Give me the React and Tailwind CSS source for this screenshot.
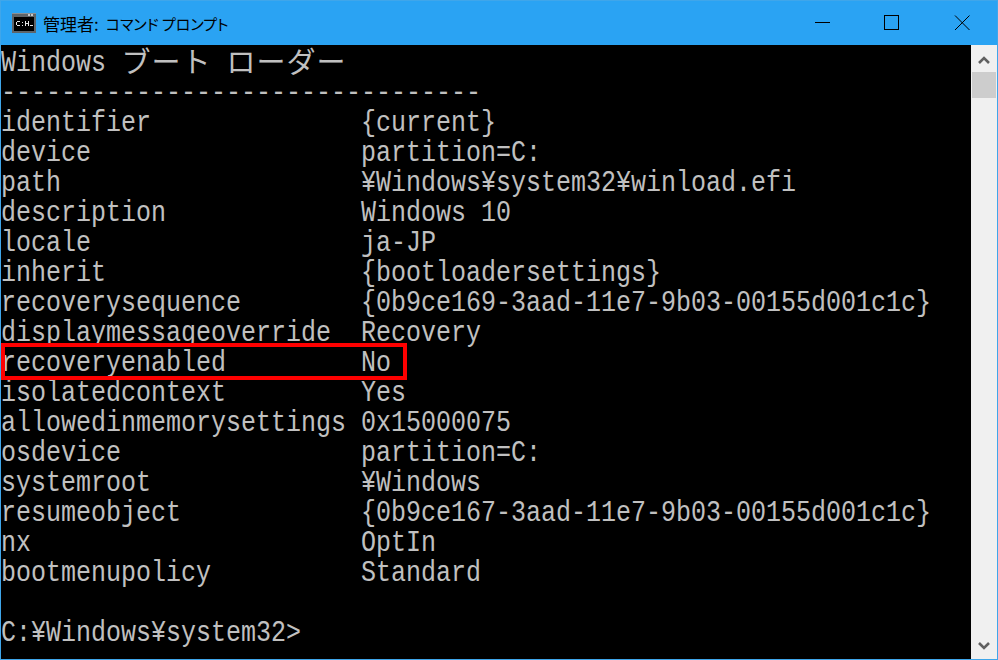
const rows = [
  ["identifier", "{current}"],
  ["device", "partition=C:"],
  ["path", "¥Windows¥system32¥winload.efi"],
  ["description", "Windows 10"],
  ["locale", "ja-JP"],
  ["inherit", "{bootloadersettings}"],
  ["recoverysequence", "{0b9ce169-3aad-11e7-9b03-00155d001c1c}"],
  ["displaymessageoverride", "Recovery"],
  ["recoveryenabled", "No"],
  ["isolatedcontext", "Yes"],
  ["allowedinmemorysettings", "0x15000075"],
  ["osdevice", "partition=C:"],
  ["systemroot", "¥Windows"],
  ["resumeobject", "{0b9ce167-3aad-11e7-9b03-00155d001c1c}"],
  ["nx", "OptIn"],
  ["bootmenupolicy", "Standard"],
];

// Latin text is Liberation Mono stretched to the tall narrow console cell (15x30)
const Mono = ({ children }) => (
  <span className="inline-block h-[25px] translate-y-[3px] scale-y-[1.2] font-['Liberation_Mono',monospace] text-[25px] leading-[25px] whitespace-pre">
    {children}
  </span>
);

const Wide = ({ children }) => (
  <span className="inline-block h-[30px] w-[30px] text-center font-['Noto_Sans_CJK_JP',sans-serif] text-[29px] leading-[30px]">
    {children}
  </span>
);

const Line = ({ children }) => <div className="flex h-[30px] items-center whitespace-pre">{children}</div>;

const CmdIcon = () => (
  <svg width="24" height="20" viewBox="0 0 24 20" shapeRendering="crispEdges">
    <rect x="0" y="0" width="24" height="20" fill="#5f6468" />
    <rect x="0" y="0" width="24" height="1" fill="#8b9094" />
    <rect x="16" y="1" width="2" height="2" fill="#c4c8cb" />
    <rect x="19" y="1" width="2" height="2" fill="#c4c8cb" />
    <rect x="2" y="4" width="20" height="14" fill="#000" />
    <path d="M5 8h3v1H5zM4 9h1v3H4zM5 12h3v1H5zM10 9h1v1h-1zM10 12h1v1h-1zM13 8h1v5h-1zM14 10h2v1h-2zM16 8h1v5h-1zM18 12h3v1h-3z" fill="#e8e8e8" />
  </svg>
);

export default function App() {
  return (
    <div className="flex h-[660px] w-[998px] flex-col bg-[#3fa6ea] p-px">
      {/* Title bar */}
      <div className="flex h-[44px] shrink-0 items-center bg-[#2aa3f3] text-black">
        <div className="pr-[7px] pl-[11px]">
          <CmdIcon />
        </div>
        <div className="flex items-center font-['Noto_Sans_CJK_JP',sans-serif] [font-feature-settings:'palt']">
          <span className="text-[17px] leading-none">管理者:</span>
          <span className="ml-[7px] text-[15px] leading-none">コマンド プロンプト</span>
        </div>
        <div className="flex-1" />
        <div className="flex w-[70px] items-center justify-center">
          <svg width="16" height="16" shapeRendering="crispEdges"><rect x="1" y="7" width="15" height="1" fill="#000" /></svg>
        </div>
        <div className="flex w-[70px] items-center justify-center">
          <svg width="16" height="16" shapeRendering="crispEdges"><rect x="0.5" y="0.5" width="14" height="14" fill="none" stroke="#000" /></svg>
        </div>
        <div className="flex w-[70px] items-center justify-center">
          <svg width="16" height="16"><path d="M1 0.5L15.5 15M15.5 0.5L1 15" stroke="#000" fill="none" /></svg>
        </div>
      </div>

      <div className="flex min-h-0 flex-1">
        {/* Console */}
        <div className="relative w-[970px] overflow-hidden bg-black text-[#c0c0c0]">
          <Line>
            <Mono>Windows </Mono>
            <Wide>ブ</Wide>
            <Wide>ー</Wide>
            <Wide>ト</Wide>
            <Mono> </Mono>
            <Wide>ロ</Wide>
            <Wide>ー</Wide>
            <Wide>ダ</Wide>
            <Wide>ー</Wide>
          </Line>
          <Line>
            <Mono>--------------------------------</Mono>
          </Line>
          {rows.map(([key, value]) => (
            <Line key={key}>
              <div className="flex w-[360px] shrink-0">
                <Mono>{key}</Mono>
              </div>
              <Mono>{value}</Mono>
            </Line>
          ))}
          <Line />
          <Line>
            <Mono>C:¥Windows¥system32&gt;</Mono>
          </Line>

          {/* Red highlight */}
          <div className="absolute left-0 top-[298px] h-[37px] w-[406px] border-[4px] border-[#ff0000]" />
        </div>

        {/* Scrollbar */}
        <div className="flex w-[26px] shrink-0 flex-col bg-[#f0f0f0]">
          <div className="flex h-[27px] items-center justify-center pt-[2px]">
            <svg width="12" height="9" viewBox="0 0 12 9"><path d="M1 8l5-5 5 5" fill="none" stroke="#606060" strokeWidth="2.6" /></svg>
          </div>
          <div className="mx-px h-[26px] bg-[#cdcdcd]" />
          <div className="flex-1" />
          <div className="flex h-[27px] items-center justify-center pt-[2px]">
            <svg width="12" height="9" viewBox="0 0 12 9"><path d="M1 1l5 5 5-5" fill="none" stroke="#606060" strokeWidth="2.6" /></svg>
          </div>
        </div>
      </div>
    </div>
  );
}
